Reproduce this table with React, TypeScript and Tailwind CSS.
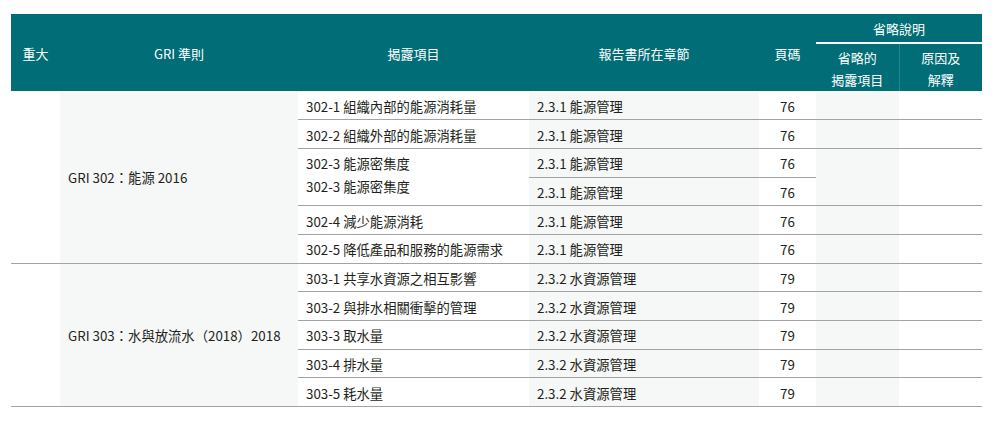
import React from "react";

type Item = { code: string; section: string; page: string };

const energy: Item[] = [
  { code: "302-1 組織內部的能源消耗量", section: "2.3.1 能源管理", page: "76" },
  { code: "302-2 組織外部的能源消耗量", section: "2.3.1 能源管理", page: "76" },
];

const energyTail: Item[] = [
  { code: "302-4 減少能源消耗", section: "2.3.1 能源管理", page: "76" },
  { code: "302-5 降低產品和服務的能源需求", section: "2.3.1 能源管理", page: "76" },
];

const water: Item[] = [
  { code: "303-1 共享水資源之相互影響", section: "2.3.2 水資源管理", page: "79" },
  { code: "303-2 與排水相關衝擊的管理", section: "2.3.2 水資源管理", page: "79" },
  { code: "303-3 取水量", section: "2.3.2 水資源管理", page: "79" },
  { code: "303-4 排水量", section: "2.3.2 水資源管理", page: "79" },
  { code: "303-5 耗水量", section: "2.3.2 水資源管理", page: "79" },
];

const line = "border-b border-[#a3a3a3]";
const gray = "bg-[#f6f7f7]";

function Cells({ item }: { item: Item }) {
  return (
    <>
      <td className={`${line} px-2 pt-[3px] h-[28.7px]`}>{item.code}</td>
      <td className={`${line} ${gray} px-2 pt-[3px]`}>{item.section}</td>
      <td className={`${line} text-center pt-[3px]`}>{item.page}</td>
      <td className={`${line} ${gray}`}></td>
      <td className={line}></td>
    </>
  );
}

export default function App() {
  return (
    <div
      className="w-[1000px] h-[424px] bg-white pt-[14px] pl-[11px]"
      style={{ fontFamily: "'Noto Sans CJK TC', 'Noto Sans', sans-serif" }}
    >
      <table className="table-fixed border-collapse w-[971px] text-[13.33px] leading-[22px] text-[#231f20]">
        <colgroup>
          <col className="w-[49px]" />
          <col className="w-[238px]" />
          <col className="w-[231px]" />
          <col className="w-[230px]" />
          <col className="w-[57px]" />
          <col className="w-[83px]" />
          <col className="w-[83px]" />
        </colgroup>
        <thead className="bg-[#006d77] text-white text-[13px]">
          <tr>
            <th rowSpan={2} className="font-normal text-center pt-[2px]">重大</th>
            <th rowSpan={2} className="font-normal text-center pt-[2px]">GRI 準則</th>
            <th rowSpan={2} className="font-normal text-center pt-[2px]">揭露項目</th>
            <th rowSpan={2} className="font-normal text-center pt-[2px]">報告書所在章節</th>
            <th rowSpan={2} className="font-normal text-center pt-[2px]">頁碼</th>
            <th colSpan={2} className="font-normal text-center h-[29px] pt-[2px] border-b-2 border-white">
              省略說明
            </th>
          </tr>
          <tr>
            <th className="font-normal text-center h-[48px] pt-[2px]">
              省略的
              <br />
              揭露項目
            </th>
            <th className="font-normal text-center pt-[2px] border-l border-white/15">
              原因及
              <br />
              解釋
            </th>
          </tr>
        </thead>
        <tbody>
          <tr>
            <td rowSpan={6} className={line}></td>
            <td rowSpan={6} className={`${line} ${gray} px-2 pt-[3px]`}>
              GRI 302：能源 2016
            </td>
            <Cells item={energy[0]} />
          </tr>
          <tr>
            <Cells item={energy[1]} />
          </tr>
          <tr>
            <td rowSpan={2} className={`${line} px-2 leading-[23px] pb-[4px]`}>
              302-3 能源密集度
              <br />
              302-3 能源密集度
            </td>
            <td className={`${line} ${gray} px-2 pt-[3px] h-[28.7px]`}>2.3.1 能源管理</td>
            <td className={`${line} text-center pt-[3px]`}>76</td>
            <td rowSpan={2} className={`${line} ${gray}`}></td>
            <td rowSpan={2} className={line}></td>
          </tr>
          <tr>
            <td className={`${line} ${gray} px-2 pt-[3px] h-[28.7px]`}>2.3.1 能源管理</td>
            <td className={`${line} text-center pt-[3px]`}>76</td>
          </tr>
          {energyTail.map((item) => (
            <tr key={item.code}>
              <Cells item={item} />
            </tr>
          ))}
          {water.map((item, i) => (
            <tr key={item.code}>
              {i === 0 && (
                <>
                  <td rowSpan={5} className={line}></td>
                  <td rowSpan={5} className={`${line} ${gray} px-2 pt-[3px]`}>
                    GRI 303：水與放流水（2018）2018
                  </td>
                </>
              )}
              <Cells item={item} />
            </tr>
          ))}
        </tbody>
      </table>
    </div>
  );
}
